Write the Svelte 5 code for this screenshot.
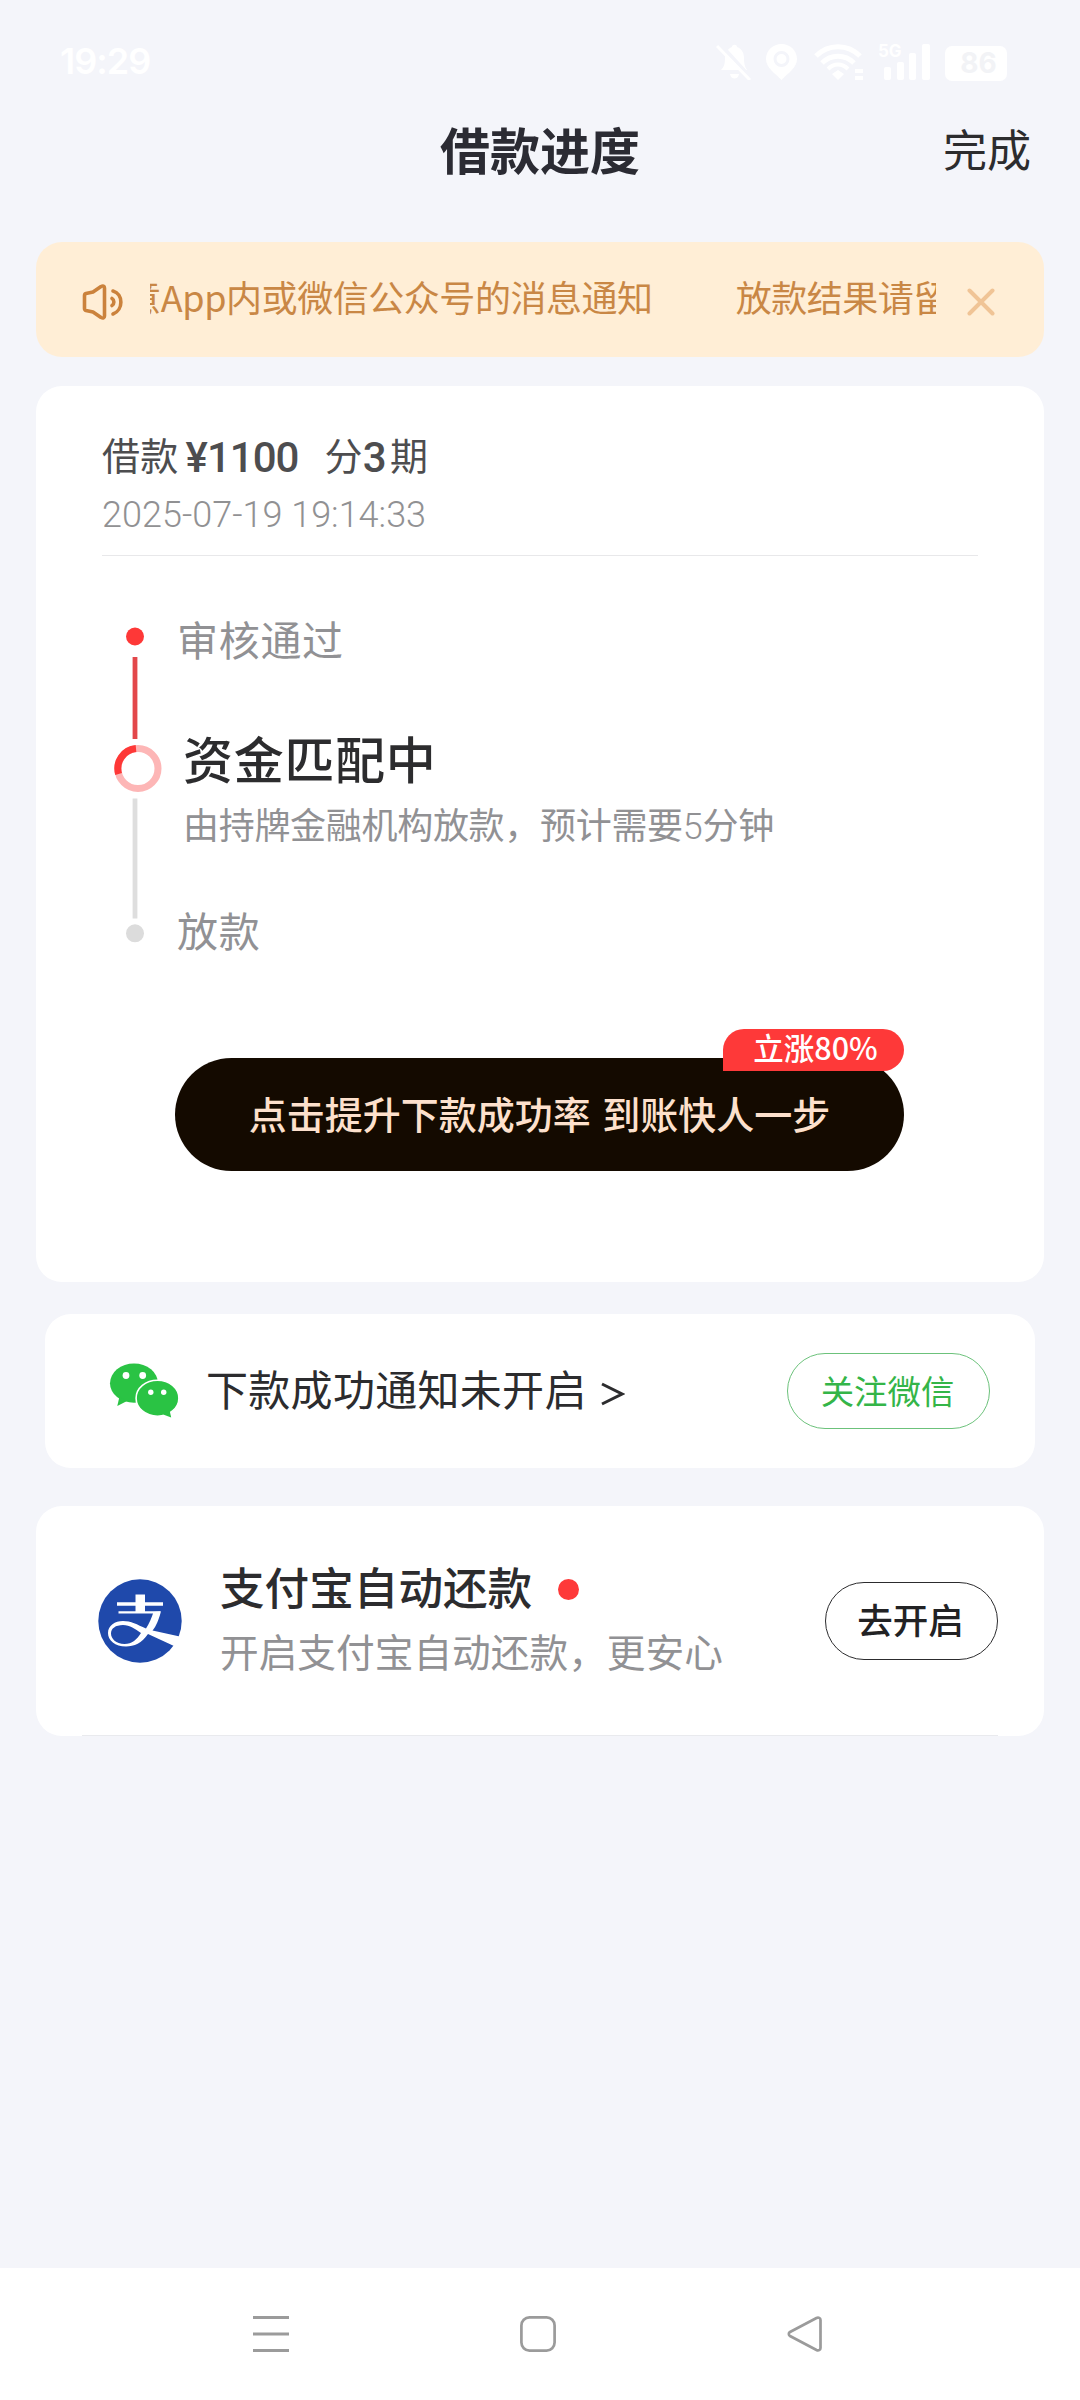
<script>
  const notice = "放款结果请留意App内或微信公众号的消息通知";

  let showNotice = true;

  function closeNotice() {
    showNotice = false;
  }
</script>

<div class="page">
  <div class="status-bar">
    <span class="time">19:29</span>
    <div class="status-icons">
      <svg class="bell" width="36" height="37" viewBox="0 0 36 37">
        <path
          d="M5 27c3-3 4-6 4-12 0-6 4-10 7-11 0-3 5-3 5 0 5 2 7 6 7 11 0 6 1 9 3 12z"
          fill="#fff"
        />
        <path d="M14 31h9c-1 6-8 6-9 0z" fill="#fff" />
        <path d="M3 0l32 35" stroke="#f4f5fa" stroke-width="4" />
        <path d="M1 3l33 34" stroke="#fff" stroke-width="3" />
      </svg>
      <svg class="pin" width="31" height="37" viewBox="0 0 31 37">
        <path
          d="M15.500 1C7 1 0 7.500 0 16c0 9 9 14 15.500 21C22 30 31 25 31 16 31 7.500 24 1 15.500 1z"
          fill="#fff"
        />
        <circle cx="15.500" cy="16" r="6.500" fill="#fff" stroke="#f4f5fa" stroke-width="3" />
      </svg>
      <svg class="wifi" width="50" height="37" viewBox="0 0 50 37" fill="none" stroke="#fff">
        <path d="M2 13C14 .5 34 .5 46 13" stroke-width="5" />
        <path d="M8 20c9-9 23-9 32 0" stroke-width="5" />
        <path d="M14 26c6-6 14-6 20 0" stroke-width="4" />
        <path d="M18 31l6-4 6 4-6 6z" fill="#fff" stroke="none" />
        <path d="M41 28h8M41 35h8" stroke-width="4" />
      </svg>
      <div class="signal">
        <span class="net">5G</span>
        <svg width="52" height="37" viewBox="0 0 52 37" fill="#fff">
          <rect x="6" y="24" width="7" height="13" rx="2" />
          <rect x="19" y="19" width="7" height="18" rx="2" />
          <rect x="31" y="10" width="7" height="27" rx="2" />
          <rect x="44" y="1" width="8" height="36" rx="2" />
        </svg>
      </div>
      <span class="battery">86</span>
    </div>
  </div>

  <header class="header">
    <h1>借款进度</h1>
    <span class="done">完成</span>
  </header>

  {#if showNotice}
    <div class="notice">
      <svg
        class="speaker"
        width="42"
        height="36"
        viewBox="0 0 42 36"
        fill="none"
        stroke="#cb823c"
        stroke-width="3.600"
        stroke-linecap="round"
        stroke-linejoin="round"
      >
        <path d="M4 9.500l7-1.500 8-5.500c2-1 3.500-.5 3.500 1.500v28c0 2-1.500 2.500-3.500 1.500L11 28l-7-1.500c-1-.3-1.500-1-1.500-2V11.500c0-1 .5-1.700 1.500-2z" />
        <path d="M30 14.500c2.500 1.500 2.500 5.500 0 7" />
        <path d="M31 7c10.500 3 10.500 19 0 23" />
      </svg>
      <div class="marquee">
        <span>{notice}</span>
        <span>{notice}</span>
      </div>
      <button class="close" on:click={closeNotice} title="关闭">
        <svg
          width="28"
          height="28"
          viewBox="0 0 28 28"
          stroke="#f0c496"
          stroke-width="4"
          stroke-linecap="round"
        >
          <path d="M2.500 2.500l23 23M25.500 2.500l-23 23" />
        </svg>
      </button>
    </div>
  {/if}

  <section class="card progress">
    <div class="loan">
      <div class="loan-info">
        <span>借款</span><b class="amount">¥1100</b><span class="term">分</span><b class="count">3</b
        ><span>期</span>
      </div>
      <div class="date">2025-07-19 19:14:33</div>
    </div>

    <div class="timeline">
      <svg class="rail" width="48" height="330" viewBox="0 0 48 330">
        <circle cx="21" cy="16.500" r="9" fill="#fe3837" />
        <rect x="18.600" y="37" width="4.800" height="82" fill="#e3474a" />
        <circle cx="24" cy="148.500" r="20" fill="none" stroke="#fdb6b6" stroke-width="7" />
        <path d="M22 128.600A20 20 0 0 0 4.600 154" fill="none" stroke="#fe3837" stroke-width="7" />
        <rect x="18.600" y="178.500" width="4.800" height="120" fill="#dedede" />
        <circle cx="21" cy="313.300" r="9" fill="#dcdcdc" />
      </svg>
      <div class="steps">
        <div class="step">审核通过</div>
        <div class="step current">
          <div class="step-title">资金匹配中</div>
          <div class="step-desc">由持牌金融机构放款，预计需要<i>5</i>分钟</div>
        </div>
        <div class="step">放款</div>
      </div>
    </div>

    <button class="boost">
      点击提升下款成功率 到账快人一步
      <span class="badge">立涨80%</span>
    </button>
  </section>

  <section class="card wechat">
    <svg class="wechat-icon" width="70" height="56" viewBox="0 0 70 56">
      <g fill="#2ac344">
        <ellipse cx="25" cy="20.200" rx="24" ry="19.600" />
        <path d="M10.500 33.500L8.300 43l9.200-4.800z" />
        <ellipse cx="48.500" cy="35.200" rx="21.400" ry="18" stroke="#fff" stroke-width="1.600" />
        <path d="M60.500 47l1.700 7.500-8-3z" />
      </g>
      <g fill="#fff">
        <circle cx="17" cy="12.500" r="3.400" />
        <circle cx="33.700" cy="12.500" r="3.400" />
        <circle cx="41.800" cy="29.200" r="2.700" />
        <circle cx="54.700" cy="29.200" r="2.700" />
      </g>
    </svg>
    <span class="wechat-text">下款成功通知未开启</span>
    <svg class="arrow" width="24" height="24" viewBox="0 0 24 24">
      <path d="M1 2l20 10L1 22" fill="none" stroke="#2c2c2e" stroke-width="3" />
    </svg>
    <button class="pill green">关注微信</button>
  </section>

  <section class="card alipay">
    <svg class="alipay-icon" width="84" height="84" viewBox="0 0 84 84">
      <circle cx="42" cy="42" r="41.700" fill="#1f49ab" />
      <path d="M37.500 15.500h9.500V33h-9.500z" fill="#fff" />
      <path d="M19 25h46" stroke="#fff" stroke-width="3.400" />
      <path d="M20.500 33.300H62" stroke="#fff" stroke-width="2.200" />
      <path
        d="M55.500 33l7.500-.8C60 44 56 50 54.500 51.500L84 58l-8 9-26-12C44 64 36 67.500 28 67.500c-11 0-18-6-18-13.500S17 42 25 42c8 0 14 3.500 23 7.500C51 45 54 38 55.500 33zM43 54C37 50 32 46 25 46c-7.500 0-12 3.500-12 8.500S18 65 26.500 65C34 65 39 60.500 43 54z"
        fill="#fff"
      />
    </svg>
    <div class="alipay-text">
      <div class="alipay-title">支付宝自动还款<span class="dot"></span></div>
      <div class="alipay-desc">开启支付宝自动还款，更安心</div>
    </div>
    <button class="pill dark">去开启</button>
    <div class="underline"></div>
  </section>

  <nav class="nav" aria-label="系统导航">
    <svg width="36" height="38" viewBox="0 0 36 38" stroke="#9b9b9b" stroke-width="3">
      <path d="M0 2.500h36M0 19h36M0 35.500h36" />
    </svg>
    <svg width="36" height="38" viewBox="0 0 36 38" fill="none" stroke="#9b9b9b" stroke-width="2.700">
      <rect x="1.400" y="2.400" width="33.200" height="33.200" rx="8" />
    </svg>
    <svg
      width="36"
      height="38"
      viewBox="0 0 36 38"
      fill="none"
      stroke="#9b9b9b"
      stroke-width="2.700"
      stroke-linejoin="round"
    >
      <path d="M29.500 3L3 17c-1.600.9-1.600 3.100 0 4l26.500 14c2 1 4 0 4-2V5c0-2-2-3-4-2z" />
    </svg>
  </nav>
</div>

<style>
  :global(body) {
    background: #f4f5fa;
  }

  .page {
    width: 1080px;
    height: 2400px;
    display: flex;
    flex-direction: column;
    overflow: hidden;
    background: #f4f5fa;
    color: #2c2c2e;
    font-family: "Noto Sans CJK SC", "Noto Sans", sans-serif;
    white-space: nowrap;
  }

  button {
    padding: 0;
    border: none;
    background: none;
    font-family: inherit;
    cursor: pointer;
  }

  svg {
    display: block;
    flex: none;
  }

  .status-bar {
    box-sizing: border-box;
    height: 80px;
    padding: 43px 73px 0 60px;
    display: flex;
    justify-content: space-between;
    color: #fff;
    font-family: Inter, sans-serif;
  }

  .time {
    font-size: 36px;
    line-height: 37px;
    font-weight: 600;
    letter-spacing: -1px;
  }

  .status-icons {
    display: flex;
  }

  .pin {
    margin-left: 14px;
  }

  .wifi {
    margin-left: 17px;
  }

  .signal {
    position: relative;
    margin-left: 14px;
  }

  .net {
    position: absolute;
    left: 0;
    top: 0;
    font-size: 17px;
    line-height: 17px;
    font-weight: 700;
  }

  .battery {
    box-sizing: border-box;
    width: 62px;
    height: 35px;
    margin: 3px 0 0 15px;
    padding-left: 5px;
    border-radius: 7px;
    background: #fff;
    color: #f2f3f6;
    font-size: 28px;
    line-height: 35px;
    font-weight: 700;
    text-align: center;
  }

  .header {
    height: 136px;
    margin-bottom: 26px;
    padding: 0 49px;
    display: grid;
    grid-template-columns: 1fr auto 1fr;
    align-items: center;
  }

  .header h1 {
    grid-column: 2;
    margin: 0;
    color: #2b2b33;
    font-size: 50px;
    font-weight: 700;
  }

  .done {
    justify-self: end;
    font-size: 44px;
  }

  .notice {
    box-sizing: border-box;
    flex: none;
    width: 1008px;
    height: 115px;
    margin: 0 36px 29px;
    padding: 0 46px;
    display: flex;
    align-items: center;
    border-radius: 26px;
    background: #ffeed6;
    color: #c98745;
  }

  .speaker {
    margin-top: 4px;
  }

  .marquee {
    width: 786px;
    margin: 0 31px 0 26px;
    padding-bottom: 7px;
    display: flex;
    overflow: hidden;
    font-size: 36px;
    line-height: 54px;
    letter-spacing: -0.45px;
  }

  .marquee span {
    flex: none;
    margin-right: 83px;
  }

  .marquee span:first-child {
    margin-left: -238px;
  }

  .close {
    width: 28px;
    height: 28px;
    margin-top: 4px;
  }

  .card {
    box-sizing: border-box;
    flex: none;
    margin: 0 36px;
    border-radius: 26px;
    background: #fff;
  }

  .progress {
    height: 896px;
    padding: 44px 66px 0;
  }

  .loan {
    padding-bottom: 17px;
    border-bottom: 1px solid #e8e8ea;
    color: #4d4d4f;
  }

  .loan-info {
    height: 46px;
    display: flex;
    font-size: 38px;
    line-height: 47px;
    letter-spacing: 0.3px;
  }

  .loan-info b {
    font-family: Roboto, sans-serif;
    font-size: 42px;
    line-height: 55px;
    font-weight: 500;
  }

  .amount {
    margin: 0 26px 0 7px;
    letter-spacing: -1px;
  }

  .count {
    margin: 0 3px 0 0;
  }

  .date {
    margin-top: 16px;
    color: #919193;
    font-family: Roboto, sans-serif;
    font-size: 36px;
    line-height: 46px;
    font-weight: 300;
  }

  .timeline {
    padding: 57px 0 0 12px;
    display: flex;
    gap: 15px;
  }

  .rail {
    margin-top: 7px;
  }

  .step {
    height: 50px;
    color: #919194;
    font-size: 41px;
    line-height: 50px;
    letter-spacing: 0.7px;
  }

  .current {
    height: 121px;
    padding: 64px 0 56px 6px;
  }

  .step-title {
    color: #2c2c2e;
    font-size: 50px;
    line-height: 60px;
    font-weight: 500;
  }

  .step-desc {
    height: 48px;
    margin-top: 13px;
    font-size: 36px;
    line-height: 46px;
    letter-spacing: -0.3px;
  }

  .step-desc i {
    font-family: Roboto, sans-serif;
    font-style: normal;
    font-weight: 300;
    line-height: 1;
  }

  .boost {
    position: relative;
    display: block;
    width: 729px;
    height: 113px;
    margin: 104px 0 0 73px;
    padding-bottom: 5px;
    border-radius: 57px;
    background: #140a00;
    color: #fde0cc;
    font-size: 38px;
    font-weight: 500;
    word-spacing: 3px;
  }

  .badge {
    position: absolute;
    right: 0;
    top: -29px;
    width: 181px;
    height: 42px;
    padding-left: 4px;
    box-sizing: border-box;
    border-radius: 21px 21px 21px 0;
    background: #fe3939;
    color: #fff;
    font-size: 30.500px;
    line-height: 37px;
  }

  .wechat {
    height: 154px;
    margin: 32px 45px 38px;
    padding: 0 45px 0 64px;
    display: flex;
    align-items: center;
  }

  .wechat-text {
    margin-left: 27px;
    padding-bottom: 6px;
    font-size: 42px;
    line-height: 50px;
    letter-spacing: 0.3px;
  }

  .arrow {
    margin: 6px auto 0 14px;
  }

  .pill {
    box-sizing: border-box;
    border-radius: 39px;
  }

  .green {
    width: 203px;
    height: 76px;
    padding: 0 2px 3px 0;
    border: 1.5px solid #6cc27b;
    color: #34b548;
    font-size: 33.400px;
  }

  .alipay {
    position: relative;
    height: 230px;
    padding: 0 46px 0 62px;
    display: flex;
    align-items: center;
  }

  .alipay-text {
    margin-left: 38px;
    padding-bottom: 9px;
  }

  .alipay-title {
    display: flex;
    align-items: center;
    font-size: 44.600px;
    line-height: 60px;
    font-weight: 500;
  }

  .dot {
    width: 21px;
    height: 21px;
    margin: 6px 0 0 26px;
    border-radius: 50%;
    background: #fe3939;
  }

  .alipay-desc {
    margin-top: 7px;
    color: #919194;
    font-size: 38.700px;
    line-height: 54px;
  }

  .dark {
    width: 173px;
    height: 78px;
    margin-left: auto;
    padding: 0 2px 5px 0;
    border: 1.5px solid #2c2c2e;
    color: #222224;
    font-size: 35.500px;
    font-weight: 500;
  }

  .underline {
    position: absolute;
    left: 46px;
    right: 46px;
    bottom: 0;
    height: 1px;
    background: #e9eaee;
  }

  .nav {
    box-sizing: border-box;
    height: 132px;
    margin-top: auto;
    padding: 0 257px 0 253px;
    display: flex;
    align-items: center;
    justify-content: space-between;
    background: #fff;
  }
</style>
